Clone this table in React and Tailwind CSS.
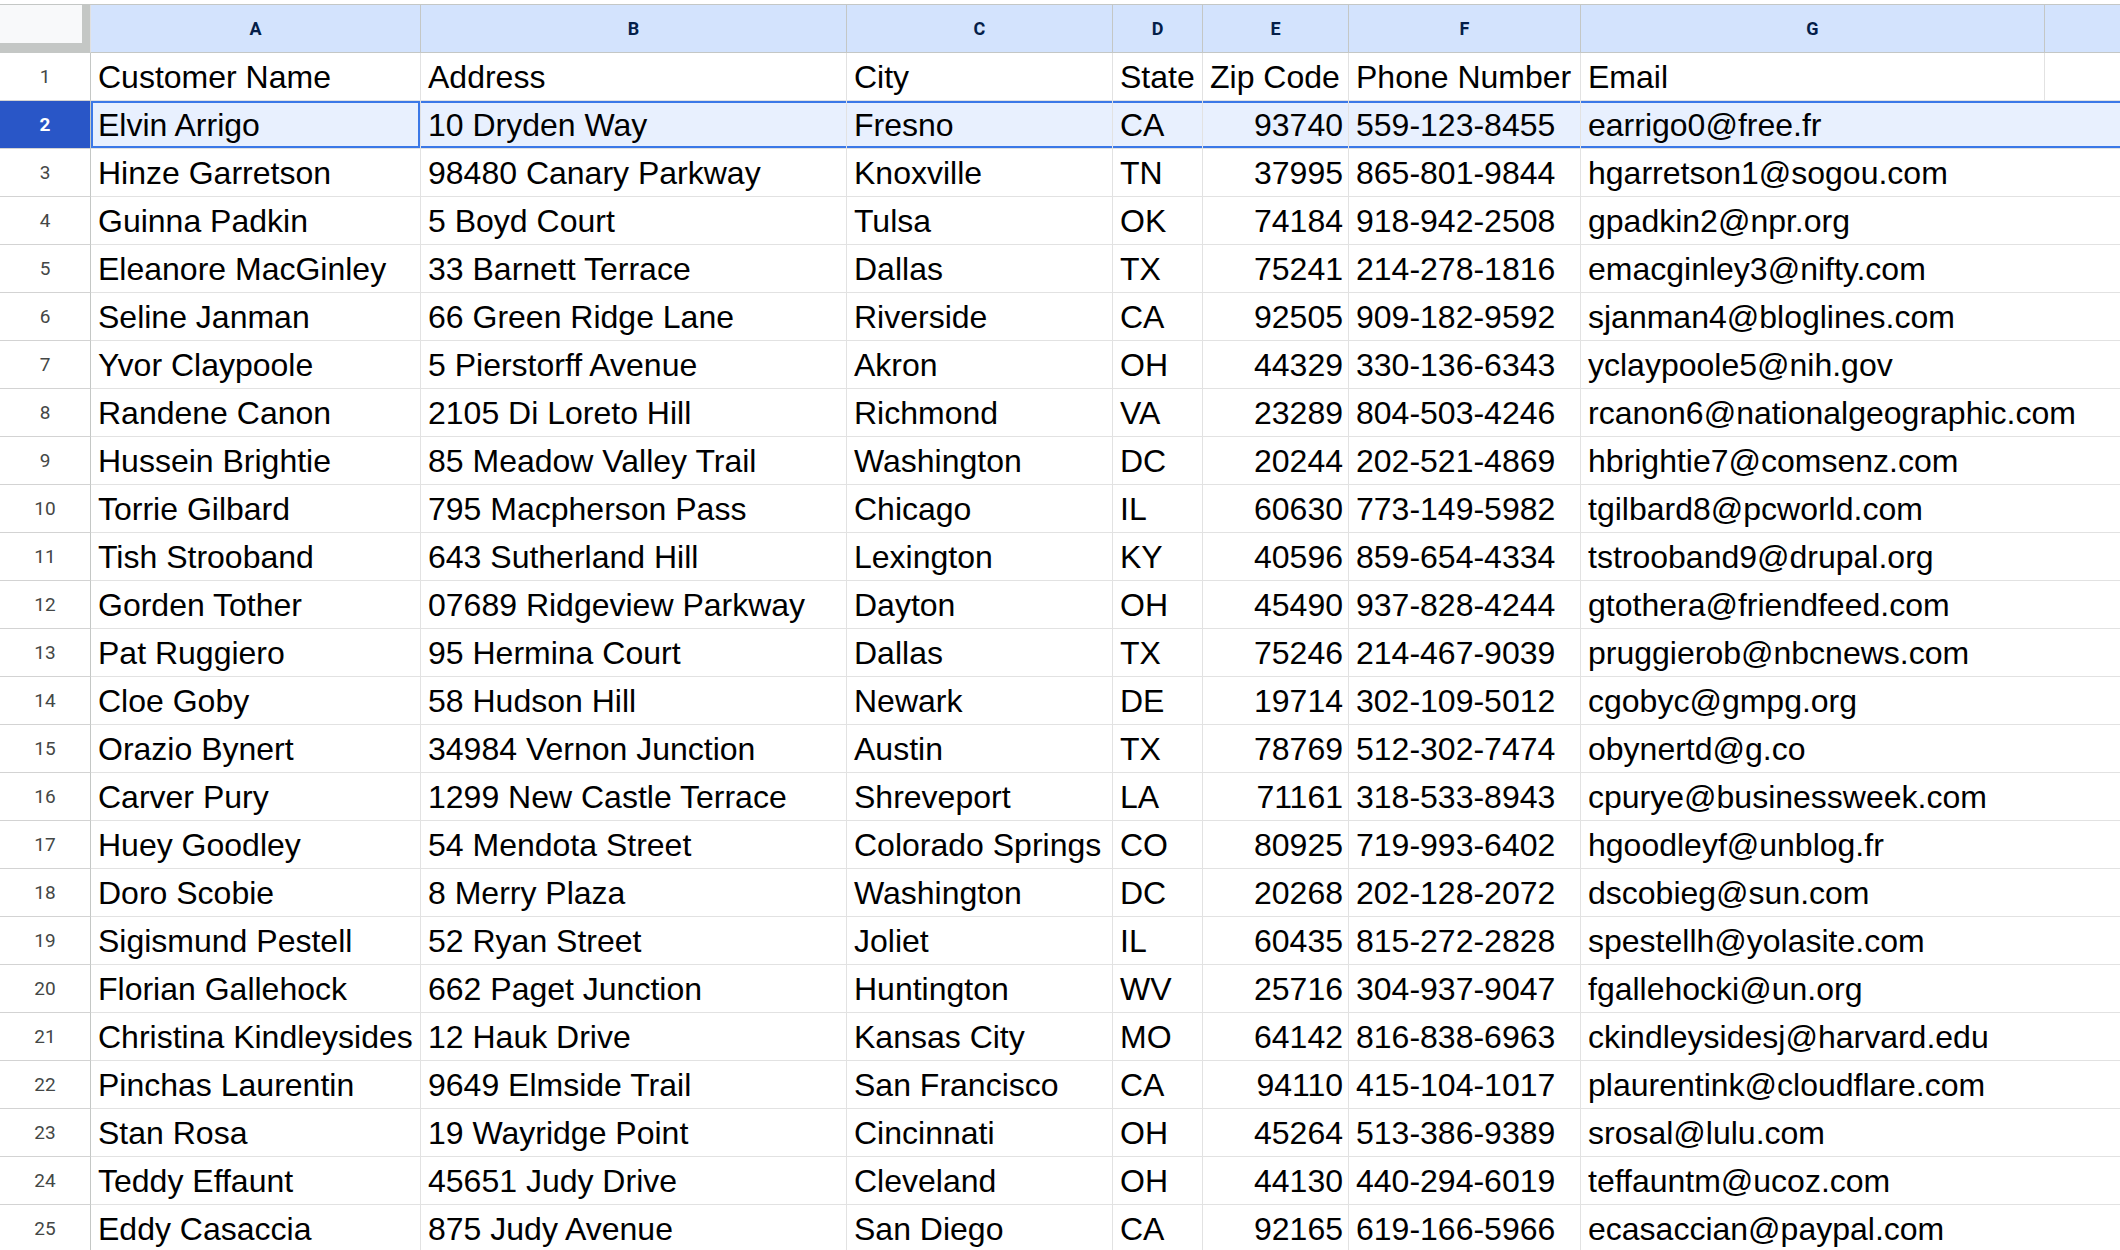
import React from "react";

const header = ["Customer Name", "Address", "City", "State", "Zip Code", "Phone Number", "Email"];
const rows = [
  ["Elvin Arrigo", "10 Dryden Way", "Fresno", "CA", "93740", "559-123-8455", "earrigo0@free.fr"],
  ["Hinze Garretson", "98480 Canary Parkway", "Knoxville", "TN", "37995", "865-801-9844", "hgarretson1@sogou.com"],
  ["Guinna Padkin", "5 Boyd Court", "Tulsa", "OK", "74184", "918-942-2508", "gpadkin2@npr.org"],
  ["Eleanore MacGinley", "33 Barnett Terrace", "Dallas", "TX", "75241", "214-278-1816", "emacginley3@nifty.com"],
  ["Seline Janman", "66 Green Ridge Lane", "Riverside", "CA", "92505", "909-182-9592", "sjanman4@bloglines.com"],
  ["Yvor Claypoole", "5 Pierstorff Avenue", "Akron", "OH", "44329", "330-136-6343", "yclaypoole5@nih.gov"],
  ["Randene Canon", "2105 Di Loreto Hill", "Richmond", "VA", "23289", "804-503-4246", "rcanon6@nationalgeographic.com"],
  ["Hussein Brightie", "85 Meadow Valley Trail", "Washington", "DC", "20244", "202-521-4869", "hbrightie7@comsenz.com"],
  ["Torrie Gilbard", "795 Macpherson Pass", "Chicago", "IL", "60630", "773-149-5982", "tgilbard8@pcworld.com"],
  ["Tish Strooband", "643 Sutherland Hill", "Lexington", "KY", "40596", "859-654-4334", "tstrooband9@drupal.org"],
  ["Gorden Tother", "07689 Ridgeview Parkway", "Dayton", "OH", "45490", "937-828-4244", "gtothera@friendfeed.com"],
  ["Pat Ruggiero", "95 Hermina Court", "Dallas", "TX", "75246", "214-467-9039", "pruggierob@nbcnews.com"],
  ["Cloe Goby", "58 Hudson Hill", "Newark", "DE", "19714", "302-109-5012", "cgobyc@gmpg.org"],
  ["Orazio Bynert", "34984 Vernon Junction", "Austin", "TX", "78769", "512-302-7474", "obynertd@g.co"],
  ["Carver Pury", "1299 New Castle Terrace", "Shreveport", "LA", "71161", "318-533-8943", "cpurye@businessweek.com"],
  ["Huey Goodley", "54 Mendota Street", "Colorado Springs", "CO", "80925", "719-993-6402", "hgoodleyf@unblog.fr"],
  ["Doro Scobie", "8 Merry Plaza", "Washington", "DC", "20268", "202-128-2072", "dscobieg@sun.com"],
  ["Sigismund Pestell", "52 Ryan Street", "Joliet", "IL", "60435", "815-272-2828", "spestellh@yolasite.com"],
  ["Florian Gallehock", "662 Paget Junction", "Huntington", "WV", "25716", "304-937-9047", "fgallehocki@un.org"],
  ["Christina Kindleysides", "12 Hauk Drive", "Kansas City", "MO", "64142", "816-838-6963", "ckindleysidesj@harvard.edu"],
  ["Pinchas Laurentin", "9649 Elmside Trail", "San Francisco", "CA", "94110", "415-104-1017", "plaurentink@cloudflare.com"],
  ["Stan Rosa", "19 Wayridge Point", "Cincinnati", "OH", "45264", "513-386-9389", "srosal@lulu.com"],
  ["Teddy Effaunt", "45651 Judy Drive", "Cleveland", "OH", "44130", "440-294-6019", "teffauntm@ucoz.com"],
  ["Eddy Casaccia", "875 Judy Avenue", "San Diego", "CA", "92165", "619-166-5966", "ecasaccian@paypal.com"],
];

const letters = ["A", "B", "C", "D", "E", "F", "G", ""];

function RowHeader({ n, selected }) {
  return (
    <div
      className={
        "flex items-center justify-center border-r border-b border-r-[#c4c7c5] border-b-[#d3d3d3] font-['Roboto',sans-serif] text-[19px] leading-none " +
        (selected ? "bg-[#2956c7] text-white font-bold" : "bg-white text-[#444746]")
      }
    >
      {n}
    </div>
  );
}

function DataRow({ n, values, selected, isHeader }) {
  return (
    <>
      <RowHeader n={n} selected={selected} />
      {values.map((v, i) => {
        const right = !isHeader && i === 4;
        const active = selected && i === 0;
        const hasRightBorder = i < 6 || (i === 6 && isHeader);
        let cls =
          "flex items-center whitespace-nowrap border-b border-b-[#e2e2e2] text-[32px] leading-none text-black font-['Liberation_Sans',Arial,sans-serif] min-w-0 ";
        cls += hasRightBorder ? "border-r border-r-[#e2e2e2] " : "";
        cls += right ? "justify-end pr-[5px] " : "pl-[7px] ";
        if (selected) {
          cls += active
            ? "bg-[#e8f0fe] shadow-[inset_0_0_0_2px_#3b78e7] "
            : "bg-[#e8f0fe] shadow-[inset_0_2px_0_#3b78e7,inset_0_-2px_0_#3b78e7] ";
        }
        return (
          <div key={i} className={cls}>
            {v}
          </div>
        );
      })}
      <div
        className={
          "border-b border-b-[#e2e2e2] " +
          (selected ? "bg-[#e8f0fe] shadow-[inset_0_2px_0_#3b78e7,inset_0_-2px_0_#3b78e7]" : "")
        }
      />
    </>
  );
}

export default function App() {
  return (
    <div className="w-[2120px] h-[1250px] overflow-hidden bg-white">
      <div className="h-[4px] bg-white" />
      <div className="grid grid-cols-[91px_330px_426px_266px_90px_146px_232px_464px_1fr] auto-rows-[48px] border-t border-t-[#c4c7c5]">
        {/* corner */}
        <div className="bg-[#c4c7c5] border-r border-r-[#e0e0e0] border-b border-b-[#c4c7c5]">
          <div className="w-[82px] h-[38px] bg-[#f8f9fa]" />
        </div>
        {letters.map((l, i) => (
          <div
            key={i}
            className={
              "flex items-center justify-center bg-[#d3e3fd] border-b border-b-[#c4c7c5] font-['Roboto',sans-serif] font-bold text-[18px] leading-none text-[#041e49] " +
              (i < 7 ? "border-r border-r-[#c4c7c5]" : "")
            }
          >
            {l}
          </div>
        ))}
        <DataRow n={1} values={header} isHeader />
        {rows.map((r, idx) => (
          <DataRow key={idx} n={idx + 2} values={r} selected={idx === 0} />
        ))}
      </div>
    </div>
  );
}
